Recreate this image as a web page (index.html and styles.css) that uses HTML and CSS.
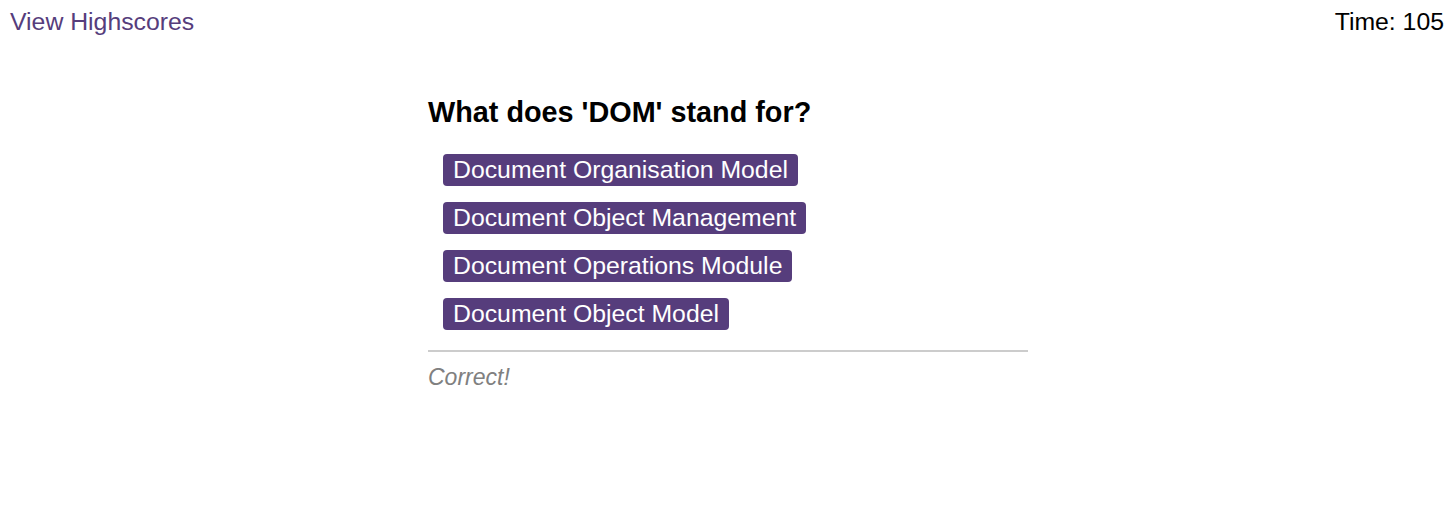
FILE: index.html
```html
<!DOCTYPE html>
<html>
<head>
<meta charset="utf-8">
<link rel="stylesheet" href="styles.css">
</head>
<body>
<header class="top">
  <a class="scores" href="#">View Highscores</a>
  <div class="timer">Time: 105</div>
</header>
<main class="quiz">
  <h2 class="question">What does 'DOM' stand for?</h2>
  <div class="choices">
    <button class="choice">Document Organisation Model</button>
    <button class="choice">Document Object Management</button>
    <button class="choice">Document Operations Module</button>
    <button class="choice">Document Object Model</button>
  </div>
  <div class="feedback">Correct!</div>
</main>
</body>
</html>
```
FILE: styles.css
```css
html, body {
  margin: 0;
  padding: 0;
  background: #fff;
  font-family: "Liberation Sans", Arial, sans-serif;
}
body {
  padding: 8px 8px 0 10px;
}
.top {
  display: flex;
  justify-content: space-between;
  align-items: flex-start;
  font-size: 24.8px;
  line-height: 28px;
}
.scores {
  color: #563d7c;
  text-decoration: none;
}
.timer {
  color: #000;
}
.quiz {
  width: 600px;
  margin: 60px auto 0;
  position: relative;
  left: 1px;
}
.question {
  margin: 0;
  font-size: 28.8px;
  line-height: 32px;
  font-weight: bold;
  color: #000;
}
.choices {
  display: flex;
  flex-direction: column;
  align-items: flex-start;
  gap: 16px;
  margin-top: 26px;
  padding-left: 15px;
}
.choice {
  font-family: "Liberation Sans", Arial, sans-serif;
  font-size: 24.8px;
  line-height: 28px;
  height: 32px;
  padding: 2px 10px;
  border: none;
  border-radius: 4px;
  background: #563d7c;
  color: #fff;
  cursor: pointer;
}
.feedback {
  margin-top: 20px;
  border-top: 2px solid #cccccc;
  padding-top: 11px;
  font-size: 23px;
  line-height: 28px;
  font-style: italic;
  color: #808080;
}
```
